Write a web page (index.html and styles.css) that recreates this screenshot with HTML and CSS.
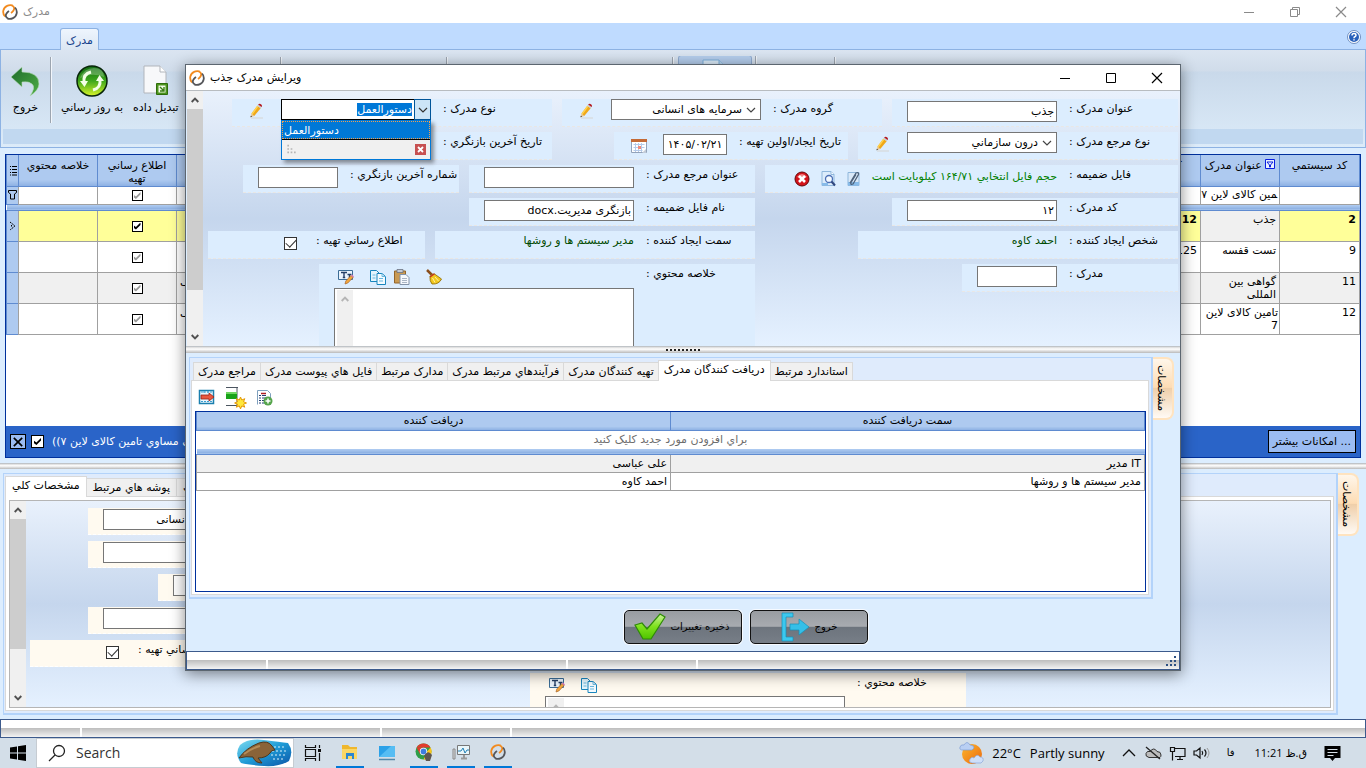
FILE: index.html
```html
<!DOCTYPE html>
<html lang="fa">
<head>
<meta charset="utf-8">
<title>مدرک</title>
<link rel="stylesheet" href="styles.css">
</head>
<body>
<svg class="defs" aria-hidden="true">
  <defs>
    <linearGradient id="g-green" x1="0" y1="0" x2="0" y2="1"><stop offset="0" stop-color="#0f6a12"/><stop offset=".5" stop-color="#3fa81c"/><stop offset="1" stop-color="#d8f52a"/></linearGradient>
    <linearGradient id="g-arrow" x1="0" y1="0" x2="1" y2="1"><stop offset="0" stop-color="#1d6b2c"/><stop offset="1" stop-color="#4fae45"/></linearGradient>
    <linearGradient id="g-check" x1="0" y1="0" x2="0" y2="1"><stop offset="0" stop-color="#c9f39a"/><stop offset=".5" stop-color="#7ee21c"/><stop offset="1" stop-color="#4fc400"/></linearGradient>
    <linearGradient id="g-sea" x1="0" y1="0" x2="1" y2="1"><stop offset="0" stop-color="#7fdcf0"/><stop offset=".5" stop-color="#1f9bd6"/><stop offset="1" stop-color="#0b56a8"/></linearGradient>
    <linearGradient id="g-sun" x1="0" y1="0" x2="1" y2="1"><stop offset="0" stop-color="#fdb62b"/><stop offset="1" stop-color="#ea6a12"/></linearGradient>
  </defs>
  <symbol id="logo" viewBox="0 0 16 16"><path d="M3 12.500A6.700 6.700 0 0 1 5 1.900Q7.500.6 10.500 1.400" fill="none" stroke="#f28a1e" stroke-width="1.800"/><path d="M10 1.500q3.500 2 1.500 5Q10.500 8 9 9" fill="none" stroke="#f28a1e" stroke-width="1.800"/><path d="M13 3.500a6.700 6.700 0 0 1-2 10.600Q8.500 15.400 5.500 14.600" fill="none" stroke="#55565a" stroke-width="1.800"/><path d="M6 14.500Q2.500 12.500 4.500 9.500 5.500 8 7 7" fill="none" stroke="#55565a" stroke-width="1.800"/></symbol>
  <symbol id="pencil" viewBox="0 0 16 16"><path d="M2 15h12" stroke="#d8dce0" stroke-width="1.500"/><path d="M1.500 14.200l1-3.700 2.700 2.600z" fill="#e9c48f"/><path d="M1.500 14.200l.4-1.500 1.100 1.100z" fill="#222"/><path d="M2.500 10.500l5.800-7.800 3.400 2.500-6.500 7.900z" fill="#f0a818"/><path d="M2.500 10.500l5.800-7.800 1.200.8-5.900 8z" fill="#ffd34f"/><path d="M8.300 2.700l.8-1.100 3.500 2.500-.9 1.100z" fill="#c9ccd2"/><path d="M9.100 1.600c1.500-2 5 .3 3.500 2.500z" fill="#b3171d"/></symbol>
  <symbol id="calendar" viewBox="0 0 16 16"><path d="M.5 1.500h15v13H.5z" fill="#fff" stroke="#93a3ba"/><path d="M0 1h16v3H0z" fill="#c46a35"/><path d="M2.500 6.500h11M2.500 9.500h11M2.500 12.500h9M4.500 5v9M7.500 5v9M10.500 5v9" stroke="#b5cbea"/><path d="M7 8h3v3H7z" fill="#f08b7b"/><path d="M11 15l4-4v4z" fill="#c3ccd8"/></symbol>
  <symbol id="delete" viewBox="0 0 16 16"><circle cx="8" cy="8" r="7" fill="#d3131b" stroke="#650708"/><path d="M3 6q5-6 10 0-5 2-10 0" fill="#f18383"/><path d="M5 5l6 6M11 5l-6 6" stroke="#fff" stroke-width="2.600"/></symbol>
  <symbol id="preview" viewBox="0 0 16 16"><path d="M2 .5h9l3 3v11H2z" fill="#dcecfb" stroke="#8fb7dc"/><path d="M11 .5v3h3" fill="#fff" stroke="#8fb7dc"/><circle cx="9" cy="8" r="3.500" fill="#f4faff" stroke="#4c6fb5" stroke-width="1.300"/><path d="M11.500 10.500l3.500 4" stroke="#30477f" stroke-width="2"/><path d="M2 12h6v2.500H2z" fill="#87bbe9"/></symbol>
  <symbol id="clip" viewBox="0 0 16 16"><path d="M2 1.500h11v13H2z" fill="#d9e9f9" stroke="#8fb7dc"/><path d="M2 11h11v3.500H2z" fill="#87bbe9"/><path d="M4 12l6-10q3-1 2.500 1.500L7 13q-3 1-2-1.500l5-8" fill="none" stroke="#4e627b" stroke-width="1.300"/></symbol>
  <symbol id="spell" viewBox="0 0 16 16"><path d="M.5 1.500h14v9H.5z" fill="#eaf4fd" stroke="#3c6d96"/><path d="M3 3.500h6M6 3.500v5M4.800 8.500h2.400M9.500 5.500h4M11.500 5.500v3.500" stroke="#253f66" stroke-width="1.400"/><path d="M7 15l.8-3 5.200-5.500 2 2L9.800 14z" fill="#f4a73c" stroke="#a8652b" stroke-width=".7"/><path d="M13 6.500l1-1 2 2-1 1z" fill="#db78b5"/></symbol>
  <symbol id="copy" viewBox="0 0 16 16"><path d="M.5 1.500h6l3 3v8h-9z" fill="#e3f5fd" stroke="#1985bd"/><path d="M7 4.500h5l3.500 3v8H7z" fill="#f4fbff" stroke="#1985bd"/><path d="M12 4.500v3h3.500M9 9.500h4M9 12h4M2.500 6h3M2.500 9h3" fill="none" stroke="#68b8df"/></symbol>
  <symbol id="paste" viewBox="0 0 16 16"><path d="M.5 2h11v12H.5z" fill="#c99a53" stroke="#93652b"/><path d="M3 .5h6v3H3z" fill="#c5cbd4" stroke="#6b7280" stroke-width=".8"/><path d="M6 5.500h6l3 3v7H6z" fill="#f6f9fd" stroke="#8493a8"/><path d="M8 9.500h5M8 11.500h5M8 13.500h5" stroke="#aab5c4"/></symbol>
  <symbol id="broom" viewBox="0 0 16 16"><path d="M1 1l5 5" stroke="#8a4f1d" stroke-width="2.500"/><path d="M4 7.500q1.500-3 4.500-2.500l7 5Q13 15.500 6 15 3.500 12 4 7.500z" fill="#f2c81f" stroke="#96730b" stroke-width=".9"/><path d="M6.500 9l2.500 4.500M9 8l3.500 4" stroke="#fff1a0"/><path d="M4 8l4.500-3.200" stroke="#c62f20" stroke-width="1.400"/></symbol>
  <symbol id="chev" viewBox="0 0 10 6"><path d="M1 1l4 4 4-4" fill="none" stroke="currentColor" stroke-width="1.200"/></symbol>
  <symbol id="arrow-up" viewBox="0 0 8 6"><path d="M.7 5L4 1.700 7.300 5" fill="none" stroke="currentColor" stroke-width="1.900"/></symbol>
  <symbol id="arrow-down" viewBox="0 0 8 6"><path d="M.7 1L4 4.300 7.300 1" fill="none" stroke="currentColor" stroke-width="1.900"/></symbol>
  <symbol id="grip" viewBox="0 0 12 12"><path d="M9 1h2v2H9zM9 5h2v2H9zM9 9h2v2H9zM5 5h2v2H5zM5 9h2v2H5zM1 9h2v2H1z" fill="currentColor"/></symbol>
  <symbol id="sheet" viewBox="0 0 26 32"><path d="M1 1h16l6 6v21H1z" fill="#f7f8fa" stroke="#b1b5bb"/><path d="M17 1v6h6" fill="#fff" stroke="#b1b5bb"/><path d="M13.500 18.500h11v11h-11z" fill="#4c941d" stroke="#2e6d0b"/><path d="M15.500 20.500h7v7h-7z" fill="#f2fbe9"/><path d="M17 22l4 4m0-4v4h-4" fill="none" stroke="#3b7e13" stroke-width="1.400"/></symbol>
  <symbol id="bluesheet" viewBox="0 0 26 32"><path d="M1 1h16l6 6v21H1z" fill="#dcecfa" stroke="#7fb0dc"/><path d="M17 1v6h6" fill="#b7d6f2" stroke="#7fb0dc"/></symbol>
  <symbol id="close" viewBox="0 0 12 12"><path d="M1 1l10 10M11 1L1 11" stroke="currentColor" stroke-width="1.200"/></symbol>
</svg>

<main class="app">
  <header class="titlebar titlebar-app">
    <svg class="ic16"><use href="#logo"/></svg>
    <h1 class="win-title">مدرک</h1>
    <div class="winctl">
      <button aria-label="کوچک کردن"><svg width="12" height="12"><path d="M1 6.500h10" stroke="currentColor"/></svg></button>
      <button aria-label="بازیابی"><svg width="12" height="12"><path d="M1.500 3.500h7v7h-7zM3.500 3.500v-2h7v7h-2" fill="none" stroke="currentColor"/></svg></button>
      <button aria-label="بستن"><svg width="12" height="12"><use href="#close"/></svg></button>
    </div>
  </header>

  <nav class="tabstrip">
    <a class="ribbon-tab" href="#ribbon">مدرک</a>
    <button class="help" aria-label="راهنما"><svg width="14" height="14" viewBox="0 0 14 14"><circle cx="7" cy="7" r="6.500" fill="#fff" stroke="#6f8fc0"/><circle cx="7" cy="7" r="5" fill="#2860bb"/><path d="M5 5.500q0-2 2-2t2 1.700q0 1-1.200 1.500Q7 7 7 8.300M7 9.300v1.300" stroke="#fff" stroke-width="1.500" fill="none"/></svg></button>
  </nav>

  <section class="ribbon" id="ribbon">
    <div class="ribbon-groups">
      <div class="rgroup g-exit"><button class="rbtn"><svg width="32" height="32" viewBox="0 0 32 32"><path d="M1 12L12 2v5q17 0 17 12 0 6-9 12 6-9 2-12-3-3-10-2v5z" fill="url(#g-arrow)" stroke="#b9dcbb" stroke-width=".6"/></svg>خروج</button></div>
      <div class="rgroup g-data">
        <button class="rbtn"><svg width="32" height="32" viewBox="0 0 32 32"><circle cx="16" cy="16" r="15" fill="url(#g-green)" stroke="#08250a" stroke-width="1.500"/><path d="M4 13Q8 3 18 3t10 9q-12-5-24 1" fill="#fff" opacity=".25"/><path d="M8 17q-1-8 7-10M24 15q1 8-7 10" fill="none" stroke="#f3ffe6" stroke-width="3"/><path d="M4 16h8l-3.500 6zM28 16h-8l3.500-6z" fill="#f3ffe6"/></svg>به روز رساني</button>
        <button class="rbtn"><svg width="26" height="32"><use href="#sheet"/></svg>تبدیل داده</button>
      </div>
      <div class="rgroup g-b"></div>
      <div class="rgroup g-c"></div>
      <div class="rgroup g-big"><button class="rbig" aria-label="سند"><svg width="26" height="32"><use href="#bluesheet"/></svg></button></div>
      <div class="rgroup g-d"></div>
    </div>
    <div class="ribbon-caption"></div>
  </section>

  <section class="docs">
    <table class="grid docs-grid" dir="rtl">
      <colgroup><col class="c-code"><col class="c-title"><col class="c-title"><col><col class="c-title"><col class="c-title"><col class="c-title"><col class="c-mark"></colgroup>
      <thead>
        <tr><th>کد سيستمي</th><th class="nowrap"><svg class="funnel" width="10" height="10"><path d="M.5.500h9v9h-9z" fill="#eaf1ff" stroke="#0a20e0"/><path d="M2 3h6L5.500 6v2h-1V6z" fill="none" stroke="#0a20e0"/></svg> عنوان مدرک</th><th>کد مدرک</th><th></th><th></th><th>اطلاع رساني تهيه</th><th>خلاصه محتوي</th><th><svg width="8" height="12"><path d="M0 2.500h1M2 2.500h5M0 5.500h1M2 5.500h5M0 8.500h1M2 8.500h5M0 11h1M2 11h5" stroke="#000"/></svg></th></tr>
      </thead>
      <tbody>
        <tr class="filter-row"><td></td><td class="nowrap">&zwj;مین کالای لاین ۷</td><td></td><td></td><td></td><td class="mid"><input class="gcheck dim" type="checkbox" checked aria-label="فیلتر اطلاع رسانی"></td><td></td><td class="mark"><svg width="9" height="10"><path d="M.500.500h8v2l-2 1.500v5h-4V4L.5 2.500z" fill="none" stroke="#000"/></svg></td></tr>
        <tr class="band"><td colspan="8"></td></tr>
        <tr class="current"><td>2</td><td class="plain">جذب</td><td>12</td><td></td><td></td><td class="mid"><input class="gcheck" type="checkbox" checked aria-label="اطلاع رسانی جذب"></td><td></td><td class="mark"><svg width="7" height="10"><path d="M1 1l5 4-5 4M2.500 4v2" fill="none" stroke="#000" stroke-dasharray="1.500 .7"/></svg></td></tr>
        <tr><td>9</td><td>تست قفسه</td><td>125</td><td></td><td></td><td class="mid"><input class="gcheck dim" type="checkbox" checked aria-label="اطلاع رسانی تست قفسه"></td><td></td><td class="mark"></td></tr>
        <tr class="alt"><td>11</td><td>گواهی بین المللی</td><td></td><td></td><td class="tail">ف</td><td class="mid"><input class="gcheck dim" type="checkbox" checked aria-label="اطلاع رسانی گواهی"></td><td></td><td class="mark"></td></tr>
        <tr><td>12</td><td class="snug">تامین کالای لاین 7</td><td></td><td></td><td class="tail">ف</td><td class="mid"><input class="gcheck dim" type="checkbox" checked aria-label="اطلاع رسانی تامین کالا"></td><td></td><td class="mark"></td></tr>
      </tbody>
    </table>
    <div class="filterbar">
      <button class="fb-close" aria-label="حذف فیلتر"><svg width="10" height="10" viewBox="0 0 12 12"><path d="M1 1l10 10M11 1L1 11" stroke="#000" stroke-width="2"/></svg></button>
      <input class="gcheck" type="checkbox" checked aria-label="فیلتر فعال">
      <span class="fb-text" dir="rtl">((عنوان مدرک مساوي تامین کالای لاین ۷))</span>
      <button class="fb-more" dir="rtl">... امکانات بیشتر</button>
    </div>
  </section>

  <div class="splitter"></div>

  <section class="lower">
    <div class="panel">
      <div class="tabs" role="tablist">
        <button class="tab active" role="tab" aria-selected="true">مشخصات کلي</button><button class="tab" role="tab">پوشه هاي مرتبط</button><button class="tab" role="tab">مدارک پیوست</button>
      </div>
      <div class="panel-body">
        <div class="scrollbox boxed">
          <div class="vscroll"><svg><use href="#arrow-up"/></svg><div class="thumb"></div><svg><use href="#arrow-down"/></svg></div>
          <div class="form cream" dir="rtl">
            <div class="stack">
              <div class="field"><label for="m1">گروه مدرک :</label><div class="ctl"><input class="txt w150" id="m1" type="text" value="سرمایه های انسانی"></div></div>
              <div class="field"><label for="m2">عنوان مدرک :</label><div class="ctl"><input class="txt w150" id="m2" type="text"></div></div>
              <div class="field"><label for="m3">مدرک :</label><div class="ctl"><input class="txt w80" id="m3" type="text"></div></div>
              <div class="field"><label for="m4">کد مدرک :</label><div class="ctl"><input class="txt w150" id="m4" type="text"></div></div>
              <div class="field after-gap"><label for="m5">اطلاع رساني تهيه :</label><div class="ctl w81"><input class="fcheck" id="m5" type="checkbox" checked></div></div>
            </div>
            <div class="field summary"><label for="m6">خلاصه محتوي :</label><div class="ctl memo"><div class="memo-tools" dir="ltr"><svg class="ic16"><use href="#spell"/></svg><svg class="ic16"><use href="#copy"/></svg></div><div class="memo-box" dir="ltr"><div class="memo-scroll"><svg><use href="#arrow-up"/></svg></div><textarea id="m6" dir="rtl"></textarea></div></div></div>
          </div>
        </div>
      </div>
    </div>
    <button class="side-tab" dir="rtl">مشخصات</button>
  </section>

  <footer class="status"><i class="s80"></i><i class="s300"></i><i class="s130"></i><i></i></footer>
</main>

<section class="dialog" role="dialog" aria-label="ویرایش مدرک جذب">
  <header class="titlebar titlebar-dialog">
    <svg class="ic16"><use href="#logo"/></svg>
    <h2 class="win-title">ویرایش مدرک جذب</h2>
    <div class="winctl">
      <button aria-label="کوچک کردن"><svg width="12" height="12"><path d="M1 6.500h10" stroke="currentColor"/></svg></button>
      <button aria-label="بزرگ کردن"><svg width="12" height="12"><path d="M1.500 1.500h9v9h-9z" fill="none" stroke="currentColor"/></svg></button>
      <button aria-label="بستن"><svg width="12" height="12"><use href="#close"/></svg></button>
    </div>
  </header>

  <div class="scrollbox dialog-form">
    <div class="vscroll"><svg><use href="#arrow-up"/></svg><div class="thumb"></div><svg><use href="#arrow-down"/></svg></div>
    <form class="form" dir="rtl">
      <div class="row">
        <div class="field"><label for="f1">عنوان مدرک :</label><div class="ctl low"><input class="txt w150" id="f1" type="text" value="جذب"></div></div>
        <div class="field"><label for="f2">گروه مدرک :</label><div class="ctl"><span class="select w150"><select id="f2"><option>سرمایه های انسانی</option></select><svg><use href="#chev"/></svg></span><button class="icb" type="button" aria-label="ویرایش"><svg class="ic16"><use href="#pencil"/></svg></button></div></div>
        <div class="field"><label for="f3">نوع مدرک :</label><div class="ctl"><span class="combo w150"><button class="combo-btn" type="button" aria-label="باز کردن"><svg><use href="#chev"/></svg></button><input id="f3" type="text" value="دستورالعمل">
          <span class="drop"><span class="drop-item" role="option">دستورالعمل</span><span class="drop-foot" dir="ltr"><svg class="drop-grip"><use href="#grip"/></svg><button class="drop-x" type="button" aria-label="بستن"><svg width="7" height="7"><path d="M1 1l5 5M6 1L1 6" stroke="#fff" stroke-width="1.800"/></svg></button></span></span></span><button class="icb" type="button" aria-label="ویرایش"><svg class="ic16"><use href="#pencil"/></svg></button></div></div>
      </div>
      <div class="row">
        <div class="field"><label for="f4">نوع مرجع مدرک :</label><div class="ctl"><span class="select w150"><select id="f4"><option>درون سازماني</option></select><svg><use href="#chev"/></svg></span><button class="icb" type="button" aria-label="ویرایش"><svg class="ic16"><use href="#pencil"/></svg></button></div></div>
        <div class="slot slot-mid"><div class="field"><label for="f5">تاریخ ایجاد/اولین تهیه :</label><div class="ctl low"><input class="txt w64" id="f5" type="text" value="۱۴۰۵/۰۲/۲۱"><button class="icb" type="button" aria-label="تقویم"><svg class="ic16"><use href="#calendar"/></svg></button></div></div></div>
        <div class="field"><label for="f6">تاریخ آخرین بازنگري :</label><div class="ctl"><input class="txt w80" id="f6" type="text"></div></div>
      </div>
      <div class="row">
        <div class="field"><span class="lbl">فایل ضمیمه :</span><div class="ctl w277"><output class="ok">حجم فایل انتخابي ۱۶۴/۷۱ کیلوبایت است</output><button class="fileb" type="button" aria-label="پیوست"><svg class="ic16"><use href="#clip"/></svg></button><button class="fileb" type="button" aria-label="مشاهده"><svg class="ic16"><use href="#preview"/></svg></button><button class="fileb" type="button" aria-label="حذف"><svg class="ic16"><use href="#delete"/></svg></button></div></div>
        <div class="field"><label for="f7">عنوان مرجع مدرک :</label><div class="ctl low"><input class="txt w150" id="f7" type="text"></div></div>
        <div class="field"><label for="f8">شماره آخرین بازنگري :</label><div class="ctl low"><input class="txt w80" id="f8" type="text"></div></div>
      </div>
      <div class="row">
        <div class="slot slot-wide"><div class="field"><label for="f9">کد مدرک :</label><div class="ctl low"><input class="txt w150" id="f9" type="text" value="۱۲"></div></div></div>
        <div class="field"><label for="f10">نام فایل ضمیمه :</label><div class="ctl low"><input class="txt w150" id="f10" type="text" value="بازنگری مدیریت.docx"></div></div>
      </div>
      <div class="row">
        <div class="slot slot-wide"><div class="field"><span class="lbl">شخص ایجاد کننده :</span><div class="ctl w184"><output>احمد کاوه</output></div></div></div>
        <div class="field"><span class="lbl">سمت ایجاد کننده :</span><div class="ctl w184"><output>مدیر سیستم ها و روشها</output></div></div>
        <div class="field"><label for="f11">اطلاع رساني تهیه :</label><div class="ctl w81"><input class="fcheck" id="f11" type="checkbox" checked></div></div>
      </div>
      <div class="row">
        <div class="slot slot-wide"><div class="field"><label for="f12">مدرک :</label><div class="ctl low"><input class="txt w80" id="f12" type="text"></div></div></div>
        <div class="field tall"><label for="f13">خلاصه محتوي :</label><div class="ctl memo"><div class="memo-tools" dir="ltr"><svg class="ic16"><use href="#spell"/></svg><svg class="ic16"><use href="#copy"/></svg><svg class="ic16 near"><use href="#paste"/></svg><svg class="ic16"><use href="#broom"/></svg></div><div class="memo-box" dir="ltr"><div class="memo-scroll"><svg><use href="#arrow-up"/></svg></div><textarea id="f13" dir="rtl"></textarea></div></div></div>
      </div>
    </form>
  </div>

  <div class="splitter gripped"><span></span></div>

  <div class="detail">
    <div class="panel">
      <div class="tabs" role="tablist">
        <button class="tab" role="tab">مراجع مدرک</button><button class="tab" role="tab">فایل هاي پیوست مدرک</button><button class="tab" role="tab">مدارک مرتبط</button><button class="tab" role="tab">فرآیندهاي مرتبط مدرک</button><button class="tab" role="tab">تهیه کنندگان مدرک</button><button class="tab active" role="tab" aria-selected="true">دریافت کنندگان مدرک</button><button class="tab" role="tab">استاندارد مرتبط</button>
      </div>
      <div class="panel-body">
        <div class="toolbar">
          <button aria-label="حذف ردیف"><svg width="18" height="22" viewBox="0 0 18 22"><path d="M1.500 3.500h14v13h-14z" fill="#eaf7fe" stroke="#1b7fae" stroke-width="1.500"/><path d="M3 5h11M3 14.500h11M6 4v2M10 4v2" stroke="#3e9fd0" stroke-dasharray="2 1"/><path d="M3 8h8V6l5 4-5 4v-2H3z" fill="#e8583f" stroke="#9a2114" stroke-width=".8"/></svg></button>
          <button aria-label="ردیف جدید"><svg width="22" height="22" viewBox="0 0 22 22"><path d="M1 .500h12M1 18.500h12M12 0v18" stroke="#4b5560"/><path d="M1 5h11v7H1z" fill="#19a319"/><path d="M1 5h11v2H1z" fill="#6fd662"/><path d="M15.500 10l1.300 3 3-1.300-1.300 3 3 1.300-3 1.200 1.300 3-3-1.300-1.300 3-1.200-3-3 1.300 1.300-3-3-1.200 3-1.300-1.300-3 3 1.300z" fill="#ffe83c" stroke="#e59a0a"/></svg></button>
          <button aria-label="افزودن از فهرست"><svg width="18" height="22" viewBox="0 0 18 22"><path d="M1.500 17.500v-14h10l3 3v11" fill="#fff" stroke="#7fa0be"/><path d="M5 6.500h5" stroke="#b01d24" stroke-width="1.500"/><path d="M3 8.500h2M6 8.500h4M3 11h2M6 11h4M3 13.500h2M6 13.500h3M3 16h2M6 16h3" stroke="#243f72"/><circle cx="12" cy="14" r="4.500" fill="#56a54c"/><path d="M12 11.500v5M9.500 14h5" stroke="#fff" stroke-width="1.500"/></svg></button>
        </div>
        <div class="people">
          <table class="grid people-grid" dir="rtl">
            <thead><tr><th>سمت دریافت کننده</th><th>دریافت کننده</th></tr></thead>
            <tbody>
              <tr class="add"><td colspan="2">براي افزودن مورد جدید کلیک کنید</td></tr>
              <tr class="band"><td colspan="2"></td></tr>
              <tr class="alt"><td>IT مدیر</td><td>علی عباسی</td></tr>
              <tr><td>مدیر سیستم ها و روشها</td><td>احمد کاوه</td></tr>
            </tbody>
          </table>
        </div>
      </div>
    </div>
    <button class="side-tab" dir="rtl">مشخصات</button>
  </div>

  <div class="actions">
    <button class="act"><svg width="32" height="28" viewBox="0 0 32 28"><path d="M1 12l7-2 5 6L26 1l5 3-14 22-8 0z" fill="url(#g-check)" stroke="#2f8a08" stroke-width="1.200"/></svg><span>ذخیره تغییرات</span></button>
    <button class="act act-exit"><svg width="30" height="30" viewBox="0 0 30 30"><path d="M2 1h11v4H6v20h7v4H2z" fill="#3cc8ee" stroke="#1591b8" stroke-width=".7"/><path d="M10 12h9V7l10 8-10 8v-5h-9z" fill="#35bfe8" stroke="#1591b8" stroke-width=".7"/></svg><span>خروج</span></button>
  </div>
  <footer class="status"><i class="s80"></i><i class="s300"></i><i class="s130"></i><i></i><svg class="resize"><use href="#grip"/></svg></footer>
</section>

<footer class="taskbar">
  <button class="start" aria-label="Start"><svg width="16" height="16"><path d="M0 2.500l7-1v6H0zM8 1.300L16 0v7.500H8zM0 8.500h7v6l-7-1zM8 8.500h8V16l-8-1.300z" fill="#000"/></svg></button>
  <label class="search"><svg width="18" height="18"><circle cx="11" cy="7" r="5.500" fill="none" stroke="#222" stroke-width="1.300"/><path d="M7 11l-6 6" stroke="#222" stroke-width="1.300"/></svg><input type="text" placeholder="Search" aria-label="Search"><svg width="56" height="28" viewBox="0 0 56 28"><path d="M4 6Q12-1 28 1t24 3q6 8 1 18-10 6-25 5T5 24Q-2 15 4 6z" fill="url(#g-sea)"/><path d="M34 8h14M36 12h16M35 16h16M37 20h12" stroke="#d9f2fb" stroke-dasharray="2 2"/><path d="M3 19q7-10 20-15 9-3 13 3l3 4q-4 0-5 3-4 5-12 5l4 5q-7 0-9-6-7-1-14 1z" fill="#8a6338" stroke="#51361a"/><path d="M8 15q8-6 16-8" stroke="#b58c58" stroke-width="2" fill="none"/></svg></label>
  <button class="tb" aria-label="Task view"><svg width="18" height="18"><path d="M1.500 1v2.500h10V1M1.500 17v-2.500h10V17M1.500 5.500h10v7h-10zM15.500 1v3M15.500 9v8" fill="none" stroke="#111" stroke-width="1.200"/><path d="M14 5h3v3h-3z" fill="#111"/></svg></button>
  <button class="tb open" aria-label="Explorer"><svg width="18" height="18"><path d="M1 2h6l2 2h7v12H1z" fill="#efb72d"/><path d="M1 6h15v10H1z" fill="#fbd765"/><path d="M5 16v-6h8v6h-2v-3H7v3z" fill="#2d87d0"/></svg></button>
  <button class="tb" aria-label="This PC"><svg width="18" height="18"><path d="M1 2h16v11H1z" fill="#2ba1e8"/><path d="M1 13L13 2h4v11z" fill="#56bdf3"/><path d="M1 15.500h16" stroke="#5288aa" stroke-width="1.500"/></svg></button>
  <button class="tb open" aria-label="Chrome"><svg width="18" height="18" viewBox="0 0 18 18"><circle cx="8.500" cy="8.500" r="8" fill="#2f9e48"/><path d="M1.600 4.500A8 8 0 0 1 15.500 4.500H8.500z" fill="#e33b2e"/><path d="M15.500 4.500A8 8 0 0 1 8.500 16.500l3.500-8z" fill="#fbc618"/><path d="M1.600 4.500L5 11l3.500-6.500z" fill="#e33b2e"/><circle cx="8.500" cy="8.500" r="3.700" fill="#fff"/><circle cx="8.500" cy="8.500" r="2.900" fill="#3b7de0"/><path d="M9 13q4-7 8-1l-2 6h-4z" fill="#5e5650"/></svg></button>
  <button class="tb open" aria-label="Monitor"><svg width="18" height="18"><path d="M1 6h2v10H1z" fill="#d8dadc" stroke="#888"/><path d="M5.500 2.500h12v9h-12z" fill="#e9f6fa" stroke="#777"/><path d="M6 8h3l2-3 2 5 2-3h2" fill="none" stroke="#2380b5"/><path d="M9 15.500h6M12 12v3" stroke="#999" stroke-width="2"/></svg></button>
  <button class="tb open" aria-label="مدرک"><svg class="ic16"><use href="#logo"/></svg></button>
  <div class="tray">
    <svg width="26" height="24" viewBox="0 0 26 24"><circle cx="13" cy="13" r="10" fill="url(#g-sun)"/><path d="M4 9q-4 0-3-3t4-2q3-5 6 0 4 0 4 3l-2 2z" fill="#b9cff3" stroke="#7e9ed6" stroke-width=".7"/><path d="M13 22q-4-1-2-4t4-1q3-5 6-1 4 0 3 4l-2 2z" fill="#cfdff8" stroke="#8ba8da" stroke-width=".7"/></svg>
    <span class="wx">22°C</span><span class="wx2">Partly sunny</span>
    <svg class="t-up" width="14" height="14"><path d="M1 10l6-6 6 6" fill="none" stroke="#111" stroke-width="1.300"/></svg>
    <svg class="t-ic" width="17" height="14"><path d="M4 11.500q-4-1-3-4t4-2q4-5 7 0 4 0 4 3.500t-4 2.500z" fill="#bcbcbc" stroke="#333"/><path d="M1 1l14 12" stroke="#222" stroke-width="1.300"/></svg>
    <svg class="t-ic" width="17" height="15"><path d="M5 2.500h11v8H6M1.500 1.500h4v4h-4zM3.500 5.500v9M8 13.500h6M11 11v2.500" fill="none" stroke="#111" stroke-width="1.200"/></svg>
    <svg class="t-ic" width="17" height="14"><path d="M1 5h2.500L7 2v10L3.500 9H1zM9 5q1.500 2 0 4M11.500 3.500q3 3.500 0 7" fill="none" stroke="#111" stroke-width="1.200"/><path d="M14 2q4 5 0 10" fill="none" stroke="#999"/></svg>
    <span class="t-lang">فا</span>
    <time class="t-time" dir="rtl">ق.ظ 11:21</time>
    <svg class="t-note" width="17" height="17"><path d="M.5 1h16v12H11l-2.500 3L6 13H.5z" fill="#000"/><path d="M3.500 4.500h10M3.500 7.500h10M3.500 10.500h6" stroke="#d6dfe7"/></svg>
  </div>
</footer>
<script>
const type = document.getElementById("f3");
type.focus({ preventScroll: true });
type.select();
</script>
</body>
</html>
```
FILE: styles.css
```css
* { box-sizing: border-box; }
html, body { height: 100%; }
body {
  margin: 0;
  display: flex;
  flex-direction: column;
  overflow: hidden;
  position: relative;
  background: #dcedfe;
  color: #000;
  font: 11px/14px "DejaVu Sans", sans-serif;
}
button, input, select, textarea { font: inherit; color: inherit; margin: 0; padding: 0; border: 0; border-radius: 0; background: none; outline: 0; }
svg { display: block; flex: none; }
.defs { position: absolute; width: 0; height: 0; }
.ic16 { width: 16px; height: 16px; }

.app { flex: 1; min-height: 0; display: flex; flex-direction: column; }

/* Title bars */
.titlebar { display: flex; align-items: center; background: #fff; flex: none; }
.titlebar-app { height: 23px; padding: 0 2px; color: #8a8a8a; }
.titlebar-dialog { height: 26px; padding: 0 0 0 3px; border-bottom: 1px solid #b8bcc0; }
.win-title { font-size: 11px; font-weight: 400; margin: 0 5px; }
.winctl { margin-left: auto; display: flex; }
.winctl button { width: 46px; height: 22px; display: grid; place-items: center; }

/* Ribbon */
.tabstrip { flex: none; height: 27px; display: flex; align-items: flex-end; padding: 0 5px 0 60px; background: #bfdbff; border-bottom: 1px solid #8db2e3; }
.ribbon-tab { width: 39px; height: 22px; margin-bottom: -1px; text-align: center; line-height: 24px; color: #15428b; text-decoration: none; background: linear-gradient(#eef5fd, #dbe6f3); border: 1px solid #8db2e3; border-bottom: 0; border-radius: 3px 3px 0 0; }
.help { margin: 0 0 5px auto; }
.ribbon { flex: none; height: 98px; display: flex; flex-direction: column; padding: 6px 2px 3px; border: 1px solid #8db2e3; border-top: 0; background: linear-gradient(#dbe5f1 0, #d0dcea 21px, #c9d9ea 22px, #dcebf9 100%); }
.ribbon-groups { flex: 1; min-height: 0; display: flex; overflow: hidden; }
.rgroup { border-right: 1px solid #9ca5b0; box-shadow: 1px 0 #f2f6fb; margin: 1px 0 6px; display: flex; }
.g-exit { width: 48px; }
.g-data { width: 230px; padding-left: 4px; }
.g-b { width: 166px; }
.g-c { width: 226px; }
.g-big { width: 83px; padding: 0 3px 0 5px; margin-top: -1px; }
.g-d { width: 79px; }
.rbtn { display: flex; flex-direction: column; align-items: center; gap: 2px; padding: 8px 4px 0 6px; white-space: nowrap; }
.rbtn > svg { height: 32px; margin-bottom: 2px; }
.g-exit .rbtn { width: 47px; padding: 8px 2px 0 0; }
.rbig { width: 74px; display: flex; justify-content: center; padding-top: 3px; background: #b4cdec; border: 1px solid #8fabd0; border-radius: 3px 3px 0 0; }
.ribbon-caption { height: 15px; background: #c1d8f0; flex: none; }

/* Shared data grid */
.grid { width: 100%; table-layout: fixed; border-collapse: collapse; background: #fff; }
.grid th { font-weight: 400; vertical-align: top; background: linear-gradient(#aecaf0 0, #aecaf0 80%, #8db1e4 100%); border: 1px solid #5f8bd0; border-top: 0; }
.grid td { border: 1px solid #a0a0a0; padding: 1px 3px; vertical-align: top; overflow: hidden; }
.grid .band td { height: 6px; padding: 0; border: 0; border-bottom: 1px solid #5f8bd0; background: linear-gradient(#b5d0f4, #88ace0); line-height: 0; }
.grid .alt td { background: #f0f0f0; }

.docs { flex: none; height: 304px; margin: 6px 5px 0; border: 1px solid #00309c; background: #fff; display: flex; flex-direction: column; }
.docs-grid th { height: 31px; padding: 4px 1px 0; line-height: 13px; }
.docs-grid td { height: 31px; line-height: 13px; padding: 2px 3px; }
.docs-grid td.snug { padding: 2px 1px 2px 0; }
.docs-grid .filter-row td { height: 18px; padding: 1px 2px; }
.docs-grid .nowrap { white-space: nowrap; }
.c-code { width: 80px; }
.c-title { width: 79px; }
.c-mark { width: 12px; }
.docs-grid .current td { background: #ffff99; font-weight: 700; }
.docs-grid .current .plain { background: #f0f0f0; font-weight: 400; }
.docs-grid td.mid { text-align: center; vertical-align: middle; }
.docs-grid td.tail { text-align: left; }
.docs-grid td.mark, .docs-grid .current td.mark { background: #aecaf0; border-color: #5f8bd0; padding: 0; vertical-align: middle; }
.docs-grid th:last-child { padding: 9px 0 0 1px; }
.mark svg { margin: 0 auto; }
.funnel { display: inline-block; }
.gcheck { appearance: none; width: 11px; height: 11px; border: 1px solid #000; background: #fff; display: inline-grid; place-items: center; vertical-align: middle; flex: none; }
.gcheck::before { content: ""; width: 7px; height: 7px; background: #000; clip-path: polygon(0 40%, 35% 65%, 100% 0, 100% 35%, 35% 100%, 0 75%); }
.gcheck.dim::before { background: #9a9a9a; }

.filterbar { margin-top: auto; height: 31px; background: #2a64c8; display: flex; align-items: center; gap: 5px; padding: 0 4px; color: #fff; }
.fb-close { width: 16px; height: 15px; border: 1px solid #000; background: #9bbcf2; display: grid; place-items: center; }
.filterbar .gcheck { width: 13px; height: 13px; }
.fb-text { margin-left: 3px; white-space: nowrap; }
.fb-more { margin-left: auto; height: 23px; padding: 0 4px; border: 1px solid #000; background: #9bbcf2; color: #000; white-space: nowrap; }

.splitter { flex: none; height: 6px; margin-top: 5px; background: linear-gradient(#d8d8d8, #fff 35%, #b9b9b9); border-top: 1px solid #c0c4c8; }
.gripped { margin: 0; height: 7px; display: flex; justify-content: center; }
.gripped span { width: 35px; height: 2px; margin-top: 2px; background: repeating-linear-gradient(90deg, #222 0 2px, transparent 2px 4px); }

/* Tabbed panels */
.lower, .detail { flex: 1; min-height: 0; display: flex; align-items: flex-start; }
.lower { padding: 4px 7px 4px 3px; }
.detail { padding: 4px 6px 0 3px; }
.panel { flex: 1; align-self: stretch; min-width: 0; display: flex; flex-direction: column; border: 2px solid #b3d3fa; border-width: 1px 2px 2px 1px; background: #dfebfc; padding: 2px 2px 2px 1px; }
.tabs { height: 20px; display: flex; align-items: flex-end; flex: none; padding-left: 3px; }
.lower .tabs { padding-left: 1px; }
.tab { height: 18px; padding: 0 4px; margin-left: -1px; white-space: nowrap; background: #f0f0f0; border: 1px solid #d9d9d9; border-bottom: 0; }
.tab.active { height: 21px; margin-bottom: -1px; padding: 0 5px 2px; background: #fff; position: relative; }
.lower .tab { padding-right: 6px; padding-left: 6px; }
.panel-body { flex: 1; min-height: 0; border: 1px solid #d9d9d9; background: #fff; padding: 3px 2px 2px 3px; display: flex; flex-direction: column; }
.side-tab { writing-mode: vertical-rl; width: 21px; height: 63px; flex: none; text-align: center; padding-right: 4px; border: 2px solid #ffe3bf; border-left: 0; border-radius: 0 8px 8px 0; background: linear-gradient(#fff6ea, #fddcb4 48%, #efcfaa 50%, #fffaf4); }

/* Scrolling forms */
.scrollbox { display: flex; min-height: 0; overflow: hidden; }
.boxed { flex: 1; border: 1px solid #b5b5b5; }
.vscroll { width: 16px; flex: none; display: flex; flex-direction: column; align-items: stretch; background: #f0f0f0; color: #505050; }
.vscroll svg { width: 8px; height: 6px; margin: 6px auto; }
.vscroll .thumb { flex: none; height: 130px; background: #cdcdcd; }
.vscroll svg:last-child { margin-top: auto; }
.dialog-form { height: 255px; flex: none; padding-left: 1px; }
.dialog-form .thumb { height: 181px; }
.form { flex: 1; min-width: 0; padding: 8px 2px 0; background: linear-gradient(#e9f1fc, #c5d6ed 50%, #e5f1ff); overflow: hidden; }
.row { display: flex; gap: 10px; height: 33px; }
.slot { display: flex; flex: none; }
.slot-wide { width: 413px; }
.slot-mid { width: 286px; }
.field { display: flex; flex: none; align-items: flex-start; height: 28px; padding-left: 15px; background: #dcedfe; border-bottom: 1px dashed #e9e7e5; }
.field > label, .field > .lbl { width: 109px; margin-left: 12px; padding-top: 3px; text-align: left; white-space: nowrap; }
.field.tall { height: auto; min-height: 120px; border: 0; }
.ctl { display: flex; align-items: flex-start; }
.ctl.low { padding-top: 2px; }
.w150 { width: 150px; }
.w80 { width: 80px; }
.w64 { width: 64px; }
.w81 { width: 81px; }
.w184 { width: 184px; }
.w277 { width: 277px; }
.txt, .select, .combo { height: 21px; border: 1px solid #767676; background: #fff; padding: 0 2px; flex: none; }
.w64 { padding: 0 1px; text-align: center; }
.select, .combo { position: relative; display: block; padding: 0; }
.select select { appearance: none; width: 100%; height: 19px; padding: 0 18px 0 0; }
.select svg { position: absolute; right: 4px; top: 7px; width: 10px; height: 6px; color: #444; pointer-events: none; }
.combo { border-color: #000; display: flex; }
.combo-btn { width: 17px; height: 21px; margin: -1px; background: #cce4f7; border: 1px solid #005499; display: grid; place-items: center; color: #333; flex: none; }
.combo-btn svg { width: 10px; height: 6px; }
.combo input { width: 128px; margin-right: 3px; height: 19px; }
.combo input::selection { background: #0078d7; color: #fff; }
.drop { position: absolute; left: -1px; top: 20px; width: 150px; border: 1px solid #0078d7; background: #f0f0f0; box-shadow: 3px 3px 4px #0006; z-index: 2; }
.drop-item { display: block; text-align: left; padding: 2px 1px; height: 18px; background: #0078d7; color: #fff; border: 1px dotted #f0a050; }
.drop-foot { display: flex; justify-content: space-between; padding: 4px; height: 20px; border-top: 1px solid #000; }
.drop-grip { width: 11px; height: 10px; color: #b5b5b5; transform: scaleX(-1); }
.drop-x { width: 11px; height: 11px; display: grid; place-items: center; background: #c75050; }
.icb { width: 34px; height: 20px; padding: 3px 16px 0 2px; display: block; }
.fileb { height: 20px; margin-right: 10px; padding-top: 6px; }
output { color: #004a00; padding-top: 3px; white-space: nowrap; }
output.ok { color: #008000; padding-top: 5px; }
.fcheck { appearance: none; width: 13px; height: 13px; margin: 6px 7px 0 0; border: 1px solid #333; background: #fff; display: grid; place-items: center; }
.fcheck::before { content: ""; width: 9px; height: 5px; border: solid #333; border-width: 0 0 1px 1px; margin-top: -3px; transform: rotate(-47deg); }
.memo { width: 300px; flex-direction: column; align-items: stretch; padding-top: 5px; }
.memo-tools { display: flex; gap: 16px; padding-left: 4px; height: 19px; }
.memo-tools .near { margin-left: -8px; }
.memo-box { display: flex; height: 100px; padding: 1px 2px; border: 1px solid #767676; background: #fff; }
.memo-scroll { width: 16px; background: #f0f0f0; color: #b5b5b5; }
.memo-scroll svg { width: 8px; height: 6px; margin: 6px auto; }
.memo-box textarea { flex: 1; min-width: 0; resize: none; }

.cream .field { background: #fffaf0; border-color: #fff; }
.cream .stack { width: 346px; margin-right: auto; display: flex; flex-direction: column; align-items: flex-start; gap: 5px; margin-bottom: 5px; }
.cream .field.after-gap { margin-right: 127px; }
.cream .ctl { padding-top: 1px; }
.cream .ctl.memo { padding-top: 4px; }
.cream .ctl.w81 { padding-top: 0; }
.cream .txt { padding-right: 6px; }
.cream .field { height: 27px; margin-bottom: 1px; }
.cream .summary { width: 436px; height: 60px; margin-right: 362px; }
.cream { padding-top: 7px; }

/* Dialog */
.dialog { position: absolute; inset: 64px 185px 97px; display: flex; flex-direction: column; border: 1px solid #5c6670; background: #dcedfe; box-shadow: 0 3px 14px #0007; }
.toolbar { display: flex; gap: 9px; height: 27px; flex: none; padding: 0 3px; }
.people { flex: 1; border: 1px solid #00309c; }
.people-grid th { height: 18px; vertical-align: middle; }
.people-grid td { height: 18px; line-height: 15px; }
.people-grid .add td { text-align: center; color: #6d6d6d; border-color: transparent; }
.actions { flex: none; height: 52px; display: flex; align-items: flex-start; justify-content: center; gap: 8px; padding: 11px 0 0 125px; }
.act { display: flex; align-items: center; width: 118px; height: 34px; padding: 0 9px; gap: 5px; border: 1px solid #111; border-radius: 5px; white-space: nowrap; background: linear-gradient(#989ca1, #a8abb0 48%, #6d747d 50%, #777e87); box-shadow: 0 0 0 1px #f6faff; font-size: 10px; }
.act-exit { padding-left: 29px; }

/* Status bars */
.status { flex: none; height: 19px; display: flex; gap: 2px; border: 1px solid #3c5a8c; background: #fff; padding-top: 8px; position: relative; }
.status i { flex: 1; background: linear-gradient(#bdbdbd, #f3f3f3); }
.status .s80 { flex: 0 0 79px; }
.status .s300 { flex: 0 0 298px; }
.status .s130 { flex: 0 0 128px; }
.resize { position: absolute; right: 2px; bottom: 2px; width: 12px; height: 12px; color: #2b4f82; }

/* Taskbar */
.taskbar { flex: none; height: 30px; display: flex; align-items: stretch; background: #d3dee8; font: 14px/20px "Open Sans", "Noto Sans", sans-serif; }
.start { width: 36px; display: grid; place-items: center; }
.search { width: 258px; display: flex; align-items: center; padding: 0 1px 0 11px; gap: 10px; background: #fff; border: 1px solid #c6ccd2; }
.search input { width: 148px; flex: 1; }
.search input::placeholder { color: #333; opacity: 1; }
.tb { width: 28px; margin: 0 4px 0 5px; display: grid; place-items: center; }
.open { border-bottom: 2px solid #0078d7; }
.tray { margin-left: auto; display: flex; align-items: center; padding-right: 25px; font-size: 13px; white-space: nowrap; }
.wx { margin-left: 7px; }
.wx2 { margin-left: 9px; }
.t-up { margin: 0 9px 0 17px; }
.t-ic { margin-right: 7px; }
.t-lang { font: 10px/20px "DejaVu Sans", sans-serif; margin: 0 20px 0 10px; }
.t-time { font: 11px/20px "Open Sans", "DejaVu Sans", sans-serif; }
.t-note { margin-left: 17px; }
```
